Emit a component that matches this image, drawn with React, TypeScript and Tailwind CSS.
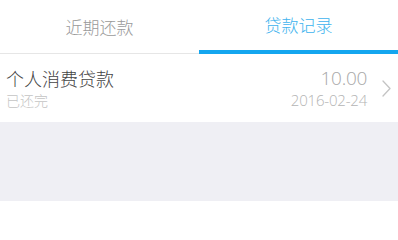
export default function App() {
  const font = { fontFamily: '"Noto Sans CJK SC", "Liberation Sans", sans-serif' };
  const thin = { fontFamily: '"Open Sans", "Liberation Sans", sans-serif' };
  return (
    <div className="w-[398px] h-[201px] bg-[#efeff4]" style={font}>
      <div className="flex h-[54px] bg-white">
        <div className="flex-1 flex flex-col">
          <div className="flex-1 flex items-center justify-center text-[17px] text-[#9a9a9a] font-light">
            近期还款
          </div>
          <div className="h-px bg-[#e6e6e6]" />
        </div>
        <div className="flex-1 flex flex-col">
          <div className="flex-1 flex items-center justify-center text-[17px] text-[#3eb3ee] font-light">
            贷款记录
          </div>
          <div className="h-[4px] bg-[#14a6ef]" />
        </div>
      </div>
      <div className="flex items-center h-[68px] bg-white pl-[6px] pr-[6px]">
        <div className="flex-1 flex flex-col">
          <span className="text-[18px] leading-[22px] text-[#444] font-light">个人消费贷款</span>
          <span className="text-[14px] leading-[18px] mt-[2px] text-[#c4c4c4] font-light">已还完</span>
        </div>
        <div className="flex flex-col items-end">
          <span className="text-[19px] leading-[22px] text-[#a8a8a8] font-light tracking-[-0.3px]" style={thin}>10.00</span>
          <span className="text-[15px] leading-[18px] mt-[2px] text-[#b4b4b4] font-light tracking-[-0.2px]" style={thin}>2016-02-24</span>
        </div>
        <svg className="ml-[14px]" width="11" height="19" viewBox="0 0 11 19" fill="none">
          <path d="M2 2 L9 9.5 L2 17" stroke="#c4c4c4" strokeWidth="1.3" strokeLinecap="round" strokeLinejoin="round" />
        </svg>
      </div>
    </div>
  );
}
